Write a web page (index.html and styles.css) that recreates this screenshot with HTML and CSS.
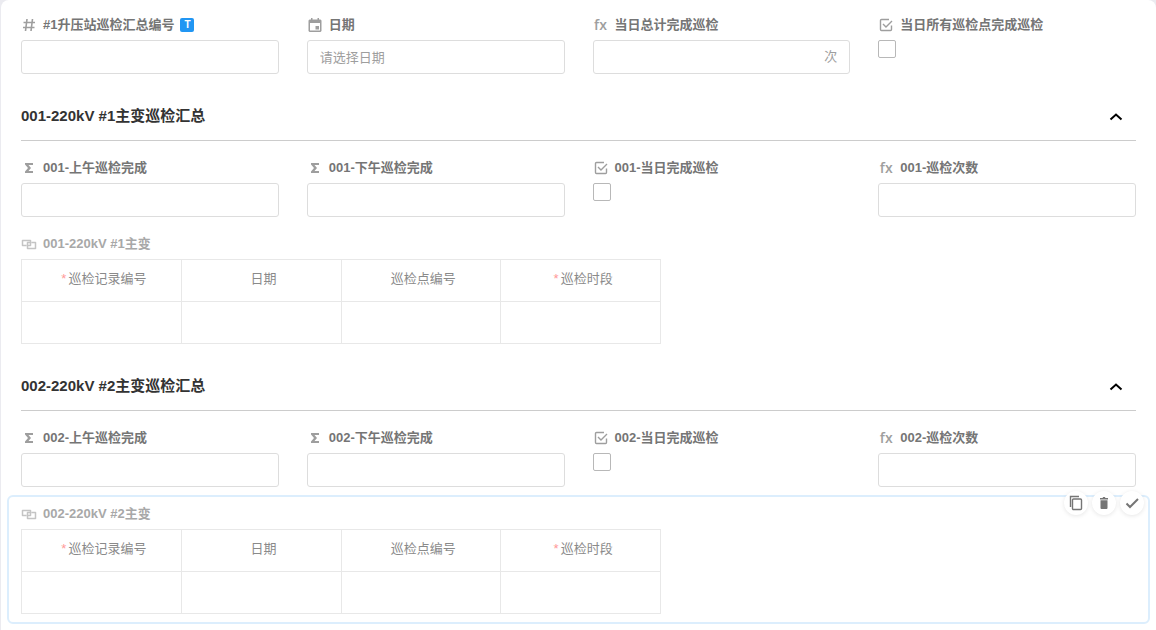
FILE: index.html
```html
<!DOCTYPE html>
<html lang="zh-CN">
<head>
    <meta charset="UTF-8">
    <meta name="viewport" content="width=device-width, initial-scale=1.0">
    <title>#1升压站巡检汇总</title>
    <link rel="stylesheet" href="styles.css">
</head>
<body>
    <svg class="sprite" aria-hidden="true">
        <symbol id="icon-number" viewBox="0 0 16 16">
            <path d="M6 2 4.500 14M11.500 2 10 14M2.500 5.500H14M2 10.500h11.500" fill="none" stroke="currentColor" stroke-width="1.600"/>
        </symbol>
        <symbol id="icon-date" viewBox="0 0 16 16">
            <path fill-rule="evenodd" d="M4 1h1.500v1.500h5V1H12v1.500h1.500l1 1V14l-1 1h-11l-1-1V3.500l1-1H4zM3 6v7.500h10V6zM8.500 9H12v3.500H8.500z" fill="currentColor"/>
        </symbol>
        <symbol id="icon-check" viewBox="0 0 16 16">
            <path d="M11 2.500H3.500a1 1 0 0 0-1 1v9a1 1 0 0 0 1 1h9a1 1 0 0 0 1-1V8.500M5 7l3 3 6-6" fill="none" stroke="currentColor" stroke-width="1.400"/>
        </symbol>
        <symbol id="icon-sum" viewBox="0 0 16 16">
            <path d="M4 3h8v2H7.500L10 8l-2.500 3H12v2H4v-1.500L7 8 4 4.500z" fill="currentColor"/>
        </symbol>
        <symbol id="icon-relation" viewBox="0 0 16 16">
            <path d="M5.500 9.500h-4v-5h8v5h-3M10.500 6.500h4v6h-8v-6h2.500" fill="none" stroke="currentColor" stroke-width="1.500" stroke-linejoin="round"/>
        </symbol>
        <symbol id="icon-up" viewBox="0 0 16 16">
            <path d="m2.500 11.500 5.500-5 5.500 5" fill="none" stroke="currentColor" stroke-width="2"/>
        </symbol>
        <symbol id="icon-copy" viewBox="0 0 16 16">
            <path d="M2.500 12V1.500H11M5.500 4h7a1 1 0 0 1 1 1v8.500a1 1 0 0 1-1 1h-7a1 1 0 0 1-1-1V5a1 1 0 0 1 1-1z" fill="none" stroke="currentColor" stroke-width="1.400"/>
        </symbol>
        <symbol id="icon-delete" viewBox="0 0 16 16">
            <path d="M4 3h2.500l.7-1h1.600l.7 1H12v1.400H4zM4.500 5.200h7V13a1 1 0 0 1-1 1h-5a1 1 0 0 1-1-1z" fill="currentColor"/>
        </symbol>
        <symbol id="icon-done" viewBox="0 0 16 16">
            <path d="m2.500 8.500 3.500 3.500 8-8" fill="none" stroke="currentColor" stroke-width="2"/>
        </symbol>
    </svg>

    <main class="panel">
        <form>
            <div class="field-row summary">
                <div class="field">
                    <label for="number"><svg class="icon"><use href="#icon-number"/></svg>#1升压站巡检汇总编号<span class="title-tag">T</span></label>
                    <input type="text" class="text-input" id="number">
                </div>
                <div class="field">
                    <label for="date"><svg class="icon"><use href="#icon-date"/></svg>日期</label>
                    <input type="text" class="text-input" id="date" placeholder="请选择日期">
                </div>
                <div class="field">
                    <label for="total"><span class="icon fx">fx</span>当日总计完成巡检</label>
                    <div class="text-input with-unit">
                        <input type="text" id="total">
                        <span class="unit">次</span>
                    </div>
                </div>
                <div class="field">
                    <label for="all-done"><svg class="icon"><use href="#icon-check"/></svg>当日所有巡检点完成巡检</label>
                    <input type="checkbox" id="all-done">
                </div>
            </div>

            <section>
                <header class="section-header">
                    <h2>001-220kV #1主变巡检汇总</h2>
                    <button type="button" class="collapse" aria-label="收起"><svg class="icon"><use href="#icon-up"/></svg></button>
                </header>
                <div class="field-row">
                    <div class="field">
                        <label for="am-1"><svg class="icon"><use href="#icon-sum"/></svg>001-上午巡检完成</label>
                        <input type="text" class="text-input" id="am-1">
                    </div>
                    <div class="field">
                        <label for="pm-1"><svg class="icon"><use href="#icon-sum"/></svg>001-下午巡检完成</label>
                        <input type="text" class="text-input" id="pm-1">
                    </div>
                    <div class="field">
                        <label for="done-1"><svg class="icon"><use href="#icon-check"/></svg>001-当日完成巡检</label>
                        <input type="checkbox" id="done-1">
                    </div>
                    <div class="field">
                        <label for="count-1"><span class="icon fx">fx</span>001-巡检次数</label>
                        <input type="text" class="text-input" id="count-1">
                    </div>
                </div>
                <div class="related">
                    <h3 id="related-1"><svg class="icon"><use href="#icon-relation"/></svg>001-220kV #1主变</h3>
                    <table aria-labelledby="related-1">
                        <thead>
                            <tr><th><span class="required">*</span>巡检记录编号</th><th>日期</th><th>巡检点编号</th><th><span class="required">*</span>巡检时段</th></tr>
                        </thead>
                        <tbody>
                            <tr><td></td><td></td><td></td><td></td></tr>
                        </tbody>
                    </table>
                </div>
            </section>

            <section>
                <header class="section-header">
                    <h2>002-220kV #2主变巡检汇总</h2>
                    <button type="button" class="collapse" aria-label="收起"><svg class="icon"><use href="#icon-up"/></svg></button>
                </header>
                <div class="field-row">
                    <div class="field">
                        <label for="am-2"><svg class="icon"><use href="#icon-sum"/></svg>002-上午巡检完成</label>
                        <input type="text" class="text-input" id="am-2">
                    </div>
                    <div class="field">
                        <label for="pm-2"><svg class="icon"><use href="#icon-sum"/></svg>002-下午巡检完成</label>
                        <input type="text" class="text-input" id="pm-2">
                    </div>
                    <div class="field">
                        <label for="done-2"><svg class="icon"><use href="#icon-check"/></svg>002-当日完成巡检</label>
                        <input type="checkbox" id="done-2">
                    </div>
                    <div class="field">
                        <label for="count-2"><span class="icon fx">fx</span>002-巡检次数</label>
                        <input type="text" class="text-input" id="count-2">
                    </div>
                </div>
                <div class="related selected">
                    <h3 id="related-2"><svg class="icon"><use href="#icon-relation"/></svg>002-220kV #2主变</h3>
                    <table aria-labelledby="related-2">
                        <thead>
                            <tr><th><span class="required">*</span>巡检记录编号</th><th>日期</th><th>巡检点编号</th><th><span class="required">*</span>巡检时段</th></tr>
                        </thead>
                        <tbody>
                            <tr><td></td><td></td><td></td><td></td></tr>
                        </tbody>
                    </table>
                    <div class="actions">
                        <button type="button" aria-label="复制"><svg class="icon"><use href="#icon-copy"/></svg></button>
                        <button type="button" aria-label="删除"><svg class="icon"><use href="#icon-delete"/></svg></button>
                        <button type="button" aria-label="完成"><svg class="icon"><use href="#icon-done"/></svg></button>
                    </div>
                </div>
            </section>
        </form>
    </main>
</body>
</html>
```
FILE: styles.css
```css
* {
    box-sizing: border-box;
}

body {
    margin: 0;
    padding-left: 1px;
    background-color: #ebebf0;
    color: #757575;
    font-family: "Liberation Sans", "Noto Sans CJK SC", sans-serif;
    font-size: 13px;
    line-height: 20px;
}

button,
input {
    font: inherit;
    color: inherit;
}

.sprite {
    display: none;
}

.icon {
    flex: none;
    width: 16px;
    height: 16px;
}

.panel {
    min-height: 100vh;
    padding: 15px 20px 6px;
    background-color: #fff;
    border-radius: 8px 8px 0 0;
}

/* fields */
.field-row {
    display: grid;
    grid-template-columns: repeat(4, minmax(0, 1fr));
    gap: 28px;
    padding-top: 17px;
    margin-bottom: 8px;
}

.summary {
    padding-top: 0;
    margin-bottom: 10px;
}

.field label,
.related h3 {
    display: flex;
    align-items: center;
    gap: 6px;
    height: 20px;
    margin: 0 0 5px;
    font-size: 13px;
    font-weight: bold;
    white-space: nowrap;
}

.field label .icon {
    color: #9e9e9e;
}

.fx {
    font-family: "Open Sans", sans-serif;
    font-size: 14px;
    font-weight: 600;
    line-height: 16px;
    text-align: center;
}

.title-tag {
    width: 14px;
    height: 14px;
    border-radius: 2px;
    background-color: #2196f3;
    color: #fff;
    font-size: 10px;
    line-height: 14px;
    text-align: center;
}

.text-input {
    display: block;
    width: 100%;
    height: 34px;
    padding: 0 12px;
    border: 1px solid #ddd;
    border-radius: 3px;
    background-color: #fff;
    outline: none;
}

.text-input::placeholder {
    color: #9e9e9e;
    opacity: 1;
}

.with-unit {
    display: flex;
    align-items: center;
}

.with-unit input {
    flex: 1;
    min-width: 0;
    border: none;
    outline: none;
}

.unit {
    color: #9e9e9e;
}

input[type="checkbox"] {
    appearance: none;
    display: block;
    width: 18px;
    height: 18px;
    margin: 0;
    border: 1px solid #b8b8b8;
    border-radius: 2px;
}

input[type="checkbox"]:checked {
    background-color: #2196f3;
}

/* section header */
.section-header {
    display: flex;
    align-items: center;
    justify-content: space-between;
    padding: 20px 12px 12px 0;
    border-bottom: 1px solid #ccc;
}

.section-header h2 {
    margin: 0;
    color: #333;
    font-size: 15px;
    line-height: 24px;
}

.collapse {
    display: flex;
    padding: 0;
    border: none;
    background: none;
    color: #000;
    cursor: pointer;
}

/* related records */
.related {
    position: relative;
    margin: 0 -14px;
    padding: 7px 12px 8px;
    border: 2px solid transparent;
    border-radius: 6px;
}

.related.selected {
    border-color: #dceefd;
}

.related h3 {
    color: #a8a8a8;
}

.related h3 .icon {
    color: #c4c4c4;
}

table {
    width: 640px;
    max-width: 100%;
    border-collapse: collapse;
    table-layout: fixed;
}

th,
td {
    height: 42px;
    padding: 0 0 3px 5px;
    border: 1px solid #e8e8e8;
    color: #8a8a8a;
    font-weight: normal;
    text-align: center;
}

.required {
    margin-right: 2px;
    color: #f99;
}

.actions {
    position: absolute;
    top: -6px;
    right: 4px;
    display: flex;
    gap: 4px;
}

.actions button {
    display: flex;
    align-items: center;
    justify-content: center;
    width: 24px;
    height: 24px;
    padding: 0;
    border: none;
    border-radius: 50%;
    background-color: #fff;
    box-shadow: 0 1px 4px rgba(0, 0, 0, 0.1);
    cursor: pointer;
}
```
